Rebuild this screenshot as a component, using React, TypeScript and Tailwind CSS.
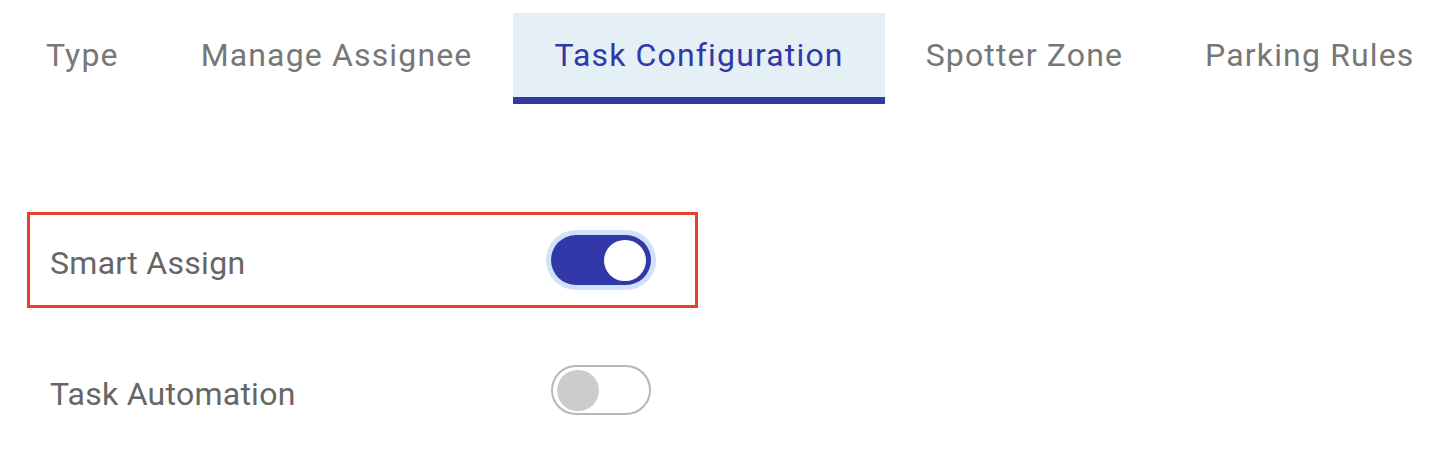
import React, { useState } from "react";

const tabs = ["Type", "Manage Assignee", "Task Configuration", "Spotter Zone", "Parking Rules"];

function Toggle({ on, onChange }: { on: boolean; onChange: () => void }) {
  if (on) {
    return (
      <button
        onClick={onChange}
        className="flex h-[50px] w-[100px] items-center justify-end rounded-full bg-[#3338a8] pr-[5px] ring-[5px] ring-[#d0e1fb]"
      >
        <span className="h-[41px] w-[42px] rounded-full bg-white" />
      </button>
    );
  }
  return (
    <button
      onClick={onChange}
      className="flex h-[50px] w-[100px] items-center justify-start rounded-full border-2 border-[#b3b7bf] bg-white pl-[4px]"
    >
      <span className="h-[41px] w-[42px] rounded-full bg-[#cccccc]" />
    </button>
  );
}

export default function App() {
  const [active, setActive] = useState(2);
  const [smart, setSmart] = useState(true);
  const [auto, setAuto] = useState(false);

  return (
    <div className="min-h-screen overflow-hidden bg-white font-['Roboto',sans-serif]">
      <div className="flex pl-[5px] pt-[13px]">
        {tabs.map((t, i) => (
          <button
            key={t}
            onClick={() => setActive(i)}
            className={
              i === active
                ? "flex h-[91px] shrink-0 items-center whitespace-nowrap border-b-[7px] border-[#3338a8] bg-[#e4f0f6] px-[41px] text-[32px] tracking-[1.15px] text-[#3338a8]"
                : "flex h-[91px] shrink-0 items-center whitespace-nowrap border-b-[7px] border-transparent px-[41px] text-[32px] tracking-[1.15px] text-[#777777]"
            }
          >
            {t}
          </button>
        ))}
      </div>

      <div className="flex flex-col gap-[34px] pl-[27px] pt-[108px]">
        <div className="flex h-[96px] w-[671px] items-center border-[3px] border-[#e8412b] pl-[20px]">
          <span className="w-[501px] pt-[5px] text-[32px] tracking-[0.3px] text-[#666666]">Smart Assign</span>
          <Toggle on={smart} onChange={() => setSmart(!smart)} />
        </div>
        <div className="flex h-[96px] w-[671px] items-center border-[3px] border-transparent pl-[20px]">
          <span className="w-[501px] pt-[7px] text-[32px] tracking-[0.25px] text-[#666666]">Task Automation</span>
          <Toggle on={auto} onChange={() => setAuto(!auto)} />
        </div>
      </div>
    </div>
  );
}
